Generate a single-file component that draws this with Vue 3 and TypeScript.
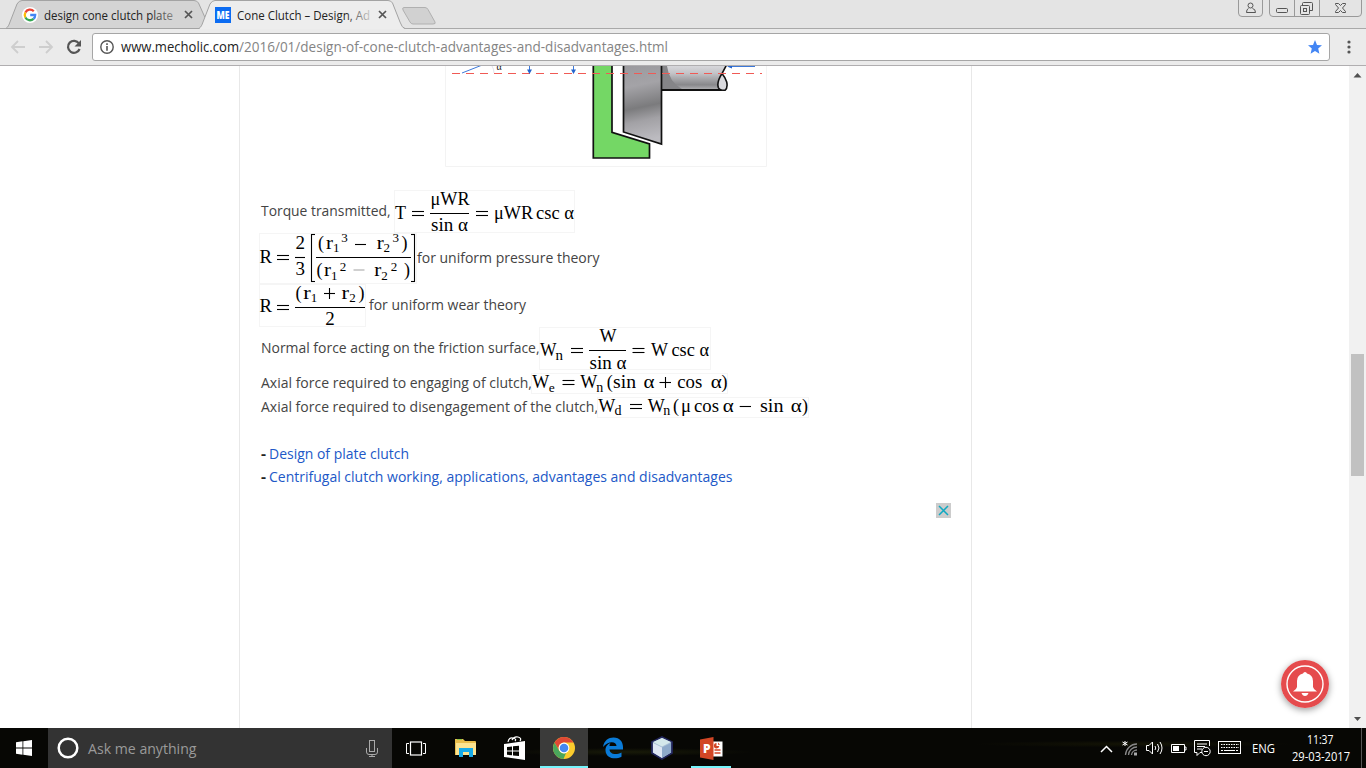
<script setup lang="ts">
import { h } from 'vue'

interface LabelProps { text: string; w: number; h: number; y: number; size: number; fill?: string; weight?: number }

// Single-line label fitted to a fixed width.
const Label = (p: LabelProps) =>
  h('svg', { width: p.w, height: p.h, style: 'display:block;flex:none;overflow:visible' }, [
    h('text', {
      x: 0, y: p.y, textLength: p.w, lengthAdjust: 'spacingAndGlyphs',
      'font-size': p.size, fill: p.fill ?? '#444', 'font-weight': p.weight ?? 400,
    }, p.text),
  ])
Label.props = ['text', 'w', 'h', 'y', 'size', 'fill', 'weight']

// [text, x, baseline, font size, fitted width]
type Glyph = [string, number, number, number, number?]
// [x1, y1, x2, y2, colour]
type Rule = [number, number, number, number, string?]
interface Formula { box: [number, number, number, number]; glyphs: Glyph[]; rules: Rule[] }

interface Row { id: string; label: string; w: number; base: number; height: number; first: boolean; formula: Formula }

const eq = (x: number, y: number): Rule[] => [[x, y, x + 12, y], [x, y + 4, x + 12, y + 4]]

const rows: Row[] = [
  {
    id: 'torque', label: 'Torque transmitted,', w: 129.5, base: 26, height: 43, first: true,
    formula: {
      box: [394, 190, 181, 43],
      glyphs: [['T', 395, 218.7, 19, 11], ['μWR', 430.5, 204.7, 19, 39], ['sin α', 431, 231, 19, 37], ['μWR', 494, 218.7, 19, 39], ['csc α', 536, 218.7, 19, 38]],
      rules: [...eq(412, 211.5), [430, 213.5, 469, 213.5], ...eq(476, 211.5)],
    },
  },
  {
    id: 'pressure', label: 'for uniform pressure theory', w: 182.5, base: 30, height: 51, first: false,
    formula: {
      box: [259, 233, 158, 51],
      glyphs: [
        ['R', 259.5, 263, 19, 12.5], ['2', 295.5, 249.3, 19], ['3', 295.5, 275.3, 19],
        ['(', 318, 249, 18], ['r', 326, 249, 19, 7], ['1', 333, 251.8, 13], ['3', 341.3, 242, 13],
        ['r', 376.7, 249, 19, 7], ['2', 383.5, 251.8, 13], ['3', 392.5, 242, 13], [')', 401.5, 249, 18],
        ['(', 316.5, 275.5, 18], ['r', 324, 275.5, 19, 7], ['1', 331, 280, 13], ['2', 339.7, 270.8, 13],
        ['r', 374.2, 275.5, 19, 7], ['2', 381.3, 280, 13], ['2', 390.7, 270.8, 13], [')', 404, 275.5, 18],
      ],
      rules: [...eq(277, 255.5), [295, 257.5, 305, 257.5], [316, 257.5, 411, 257.5], [355, 244.5, 366, 244.5], [353.5, 270, 364.5, 270, '#aaa'],
        [311.5, 234, 311.5, 282], [311, 234.5, 315, 234.5], [311, 281.5, 315, 281.5],
        [414.5, 234, 414.5, 282], [411, 234.5, 415, 234.5], [411, 281.5, 415, 281.5]],
    },
  },
  {
    id: 'wear', label: 'for uniform wear theory', w: 157, base: 26, height: 43, first: false,
    formula: {
      box: [259, 284, 107, 43],
      glyphs: [['R', 259.5, 312.3, 19, 12.5], ['(', 295.5, 299.3, 18], ['r', 303.3, 299.3, 19, 7.5], ['1', 310.7, 302, 13], ['r', 341.5, 299.3, 19, 7.5], ['2', 349.3, 302, 13], [')', 358.5, 299.3, 18], ['2', 325.3, 325.3, 19]],
      rules: [...eq(277, 305.5), [295, 307.5, 365, 307.5], [324, 293.5, 335, 293.5], [329.5, 288, 329.5, 299]],
    },
  },
  {
    id: 'normal', label: 'Normal force acting on the friction surface,', w: 278.5, base: 26, height: 46, first: true,
    formula: {
      box: [539, 327, 172, 43],
      glyphs: [['W', 540, 356, 19, 16.5], ['n', 555.5, 360, 14, 7.5], ['W', 599.5, 342, 19, 17], ['sin α', 589.5, 369, 19, 37], ['W', 651, 356, 19, 17], ['csc α', 671.5, 356, 19, 37.5]],
      rules: [...eq(571, 348.5), [589, 350.5, 626, 350.5], ...eq(632.5, 348.5)],
    },
  },
  {
    id: 'engage', label: 'Axial force required to engaging of clutch,', w: 271, base: 15, height: 24, first: true,
    formula: {
      box: [531, 373, 197, 21],
      glyphs: [['W', 532.3, 388.3, 19, 17], ['e', 548.7, 391.5, 13, 6], ['W', 580.3, 388.3, 19, 17], ['n', 596.3, 391.5, 14, 7], ['(', 606.7, 388.3, 18], ['sin', 613, 388.3, 19, 23], ['α', 643.5, 388.3, 19, 11], ['cos', 677.3, 388.3, 19, 25], ['α', 710.7, 388.3, 19, 11], [')', 721.5, 388.3, 18]],
      rules: [...eq(562.5, 380.5), [659.5, 382.5, 671, 382.5], [665.5, 377, 665.5, 388]],
    },
  },
  {
    id: 'disengage', label: 'Axial force required to disengagement of the clutch,', w: 337, base: 15, height: 24, first: true,
    formula: {
      box: [597, 397, 212, 21],
      glyphs: [['W', 598.3, 412.3, 19, 17], ['d', 614.5, 415.3, 14, 7], ['W', 647.7, 412.3, 19, 17], ['n', 663.3, 415.3, 14, 7], ['(', 673, 412.3, 18], ['μ', 681, 412.3, 19, 10], ['cos', 694, 412.3, 19, 25], ['α', 722.7, 412.3, 19, 11], ['sin', 760, 412.3, 19, 23.5], ['α', 790.7, 412.3, 19, 11], [')', 802, 412.3, 18]],
      rules: [...eq(630, 404.5), [739.7, 406.5, 751, 406.5]],
    },
  },
]

const FormulaView = (p: { formula: Formula }) => {
  const [x, y, w, hh] = p.formula.box
  return h('svg', { width: w, height: hh, viewBox: `${x} ${y} ${w} ${hh}`, style: 'display:block;flex:none;overflow:visible' }, [
    h('rect', { x: x + 0.5, y: y + 0.5, width: w - 1, height: hh - 1, fill: 'none', stroke: '#f5f5f5' }),
    ...p.formula.glyphs.map(g => h('text', {
      x: g[1], y: g[2], 'font-size': g[3], fill: '#000',
      'font-family': '"Liberation Serif", serif',
      ...(g[4] ? { textLength: g[4], lengthAdjust: 'spacingAndGlyphs' } : {}),
    }, g[0])),
    ...p.formula.rules.map(r => h('line', { x1: r[0], y1: r[1], x2: r[2], y2: r[3], stroke: r[4] ?? '#000', 'stroke-width': 1.1 })),
  ])
}
FormulaView.props = ['formula']

const links = [
  { text: 'Design of plate clutch', w: 140 },
  { text: 'Centrifugal clutch working, applications, advantages and disadvantages', w: 463.5 },
]
</script>

<template>
  <div class="screen">
    <header class="tabs">
      <svg class="tab-shapes" width="1366" height="29" fill="none">
        <path d="M0 28.500H1366" stroke="#a9a9a9" />
        <path d="M6 28.500C8 27 9 25 10 22L17 4Q19 .5 22 .5H194Q197 .5 198.500 3L207 22L212 28.500Z" fill="#d4d4d4" stroke="#a3a3a3" />
        <path d="M199 29C201 27 202 25 203 22L210 4Q212 .5 215 .5H388Q391 .5 392.500 3L400 22Q402 28 405 29Z" fill="#ededed" />
        <path d="M199 28.500C201 27 202 25 203 22L210 4Q212 .5 215 .5H388Q391 .5 392.500 3L400 22Q402 28 405 28.500" stroke="#a3a3a3" />
        <path d="M404 7.500H425Q427 7.500 428 9.500L435 22Q436 24 433 24H413Q411 24 410 22L403 10Q402 7.500 404 7.500Z" fill="#d1d1d1" stroke="#b0b0b0" />
      </svg>
      <div class="tab first">
        <svg width="16" height="16" viewBox="0 0 16 16" fill="none">
          <circle cx="8" cy="8" r="8" fill="#fff" />
          <g stroke-width="2.300">
            <path d="M11.800 4.200A5.200 5.200 0 0 0 3.400 5.500" stroke="#ea4335" />
            <path d="M3.400 5.500A5.200 5.200 0 0 0 3.400 10.500" stroke="#fbbc05" />
            <path d="M3.400 10.500A5.200 5.200 0 0 0 11.500 11.900" stroke="#34a853" />
            <path d="M11.500 11.900A5.200 5.200 0 0 0 13.200 8H8.200" stroke="#4285f4" />
          </g>
        </svg>
        <Label class="t1" text="design cone clutch plate" :w="129" :h="28" :y="19" :size="12" fill="#222" />
        <svg class="x" width="9" height="9"><path d="M1 1L8 8M8 1L1 8" stroke="#555" stroke-width="1.700" /></svg>
        <i class="fade grey"></i>
      </div>
      <div class="tab second">
        <svg width="16" height="16">
          <rect width="16" height="16" fill="#0c6cf2" />
          <text x="1.500" y="12" font-size="11" font-weight="800" fill="#fff" textLength="13" lengthAdjust="spacingAndGlyphs">ME</text>
        </svg>
        <Label class="t2" text="Cone Clutch – Design, Ad" :w="133" :h="28" :y="19" :size="12" fill="#222" />
        <svg class="x" width="9" height="9"><path d="M1 1L8 8M8 1L1 8" stroke="#555" stroke-width="1.700" /></svg>
        <i class="fade light"></i>
      </div>
      <svg class="window-buttons" width="126" height="18" fill="none" stroke="#999">
        <path d="M.5 -1V13Q.5 16.500 4 16.500H21Q24.500 16.500 24.500 13V-1M31.500 -1V13Q31.500 16.500 35 16.500H120Q123.500 16.500 123.500 13V-1M56.500 0V16M81.500 0V16" />
        <g stroke="#555">
          <circle cx="12.500" cy="5.500" r="2.500" />
          <path d="M10.500 8.500Q8.500 9 8.500 12.500H17.500Q17.500 9 14.500 8.500" />
          <rect x="38.500" y="8.500" width="11" height="4" rx="1" />
          <path d="M64.500 5.500V3.500Q64.500 2.500 65.500 2.500H73.500Q74.500 2.500 74.500 3.500V10.500H71.500" />
          <rect x="62.500" y="5.500" width="9" height="9" rx="1" /><rect x="65.500" y="8.500" width="3" height="3" />
          <path d="M97.500 3.500H100.500L102.500 5.500L104.500 3.500H107.500V4.500L104.500 8L107.500 11.500V12.500H104.500L102.500 10.500L100.500 12.500H97.500V11.500L100.500 8L97.500 4.500Z" />
        </g>
      </svg>
    </header>

    <div class="toolbar">
      <svg class="nav" width="92" height="36" fill="none">
        <path d="M25 18H12.500M18 12L12 18L18 24M39 18H51.500M46 12L52 18L46 24" stroke="#cecece" stroke-width="1.800" />
        <path d="M79 14.500A6 6 0 1 0 79.600 20" stroke="#555" stroke-width="2.200" />
        <path d="M81 11V17.500H74.500Z" fill="#555" />
      </svg>
      <div class="omnibox">
        <svg width="14" height="14" fill="none" stroke="#555"><circle cx="7" cy="7" r="6.200" stroke-width="1.400" /><path d="M7 6V10.800M7 3.300V4.900" stroke-width="1.600" /></svg>
        <Label class="host" text="www.mecholic.com" :w="118" :h="26" :y="18" :size="14" fill="#222" />
        <Label text="/2016/01/design-of-cone-clutch-advantages-and-disadvantages.html" :w="429" :h="26" :y="18" :size="14" fill="#848484" />
        <svg class="star" width="14" height="14"><path d="M7 0L9 4.900L14 5.300L10.200 8.600L11.400 13.700L7 11L2.600 13.700L3.800 8.600L0 5.300L5 4.900Z" fill="#4285f4" /></svg>
      </div>
      <svg class="menu" width="6" height="14" fill="#555"><circle cx="3" cy="2" r="1.600" /><circle cx="3" cy="7" r="1.600" /><circle cx="3" cy="12" r="1.600" /></svg>
    </div>

    <main class="page">
      <article class="article">
        <svg class="figure" width="322" height="101" viewBox="445 66 322 101" fill="none">
          <defs>
            <linearGradient id="cone" x1="0" y1="0" x2=".1" y2="1">
              <stop offset="0" stop-color="#9a999d" /><stop offset=".3" stop-color="#a4a3a7" /><stop offset=".58" stop-color="#7b7b7d" /><stop offset=".75" stop-color="#a2a1a5" /><stop offset="1" stop-color="#bcbbc0" />
            </linearGradient>
            <linearGradient id="shaft" x1="0" y1="0" x2="0" y2="1">
              <stop offset="0" stop-color="#dcdce0" /><stop offset=".35" stop-color="#c4c4c8" /><stop offset=".8" stop-color="#88888b" /><stop offset="1" stop-color="#b5b5b8" />
            </linearGradient>
          </defs>
          <path d="M445.500 66V166.500H766.500V66" stroke="#f3f3f3" />
          <path d="M593.300 64V158H649.500V144L612 132.300V64Z" fill="#74d765" stroke="#111" stroke-width="1.700" />
          <path d="M662 64H727L718 80Q717 87 720 90H662Z" fill="url(#shaft)" />
          <path d="M662 66H667Q669 82 682 89H662Z" fill="#858588" />
          <path d="M662 90H724" stroke="#111" stroke-width="1.800" />
          <path d="M726.500 65L722 73.500Q716.500 82 718.300 87.500Q719.500 90.500 725 90.300Q728 88 726.700 82Q725 77 722 73.500" fill="#dadade" stroke="#111" stroke-width="1.600" />
          <path d="M623.500 64V132L661.500 144V64Z" fill="url(#cone)" stroke="#111" stroke-width="1.700" />
          <path d="M452 73.500H762" stroke="#f05a55" stroke-dasharray="8 6" />
          <path d="M462 73L481 65.500M529.500 66V70M573.500 66V70M731 66.500H755" stroke="#3c78d8" />
          <path d="M527 69.500H532L529.500 74ZM571 69.500H576L573.500 74ZM727 66.500L732 65V68.500Z" fill="#2464cc" />
          <path d="M492 66Q494 69 494 73" stroke="#e2e2ea" />
          <text x="496.500" y="70" font-size="10" font-family="Liberation Serif, serif" fill="#111">α</text>
        </svg>

        <div v-for="r in rows" :key="r.id" class="row" :class="r.id">
          <template v-if="r.first">
            <Label class="lead" :text="r.label" :w="r.w" :h="r.height" :y="r.base" :size="14" />
            <i class="space"></i>
            <FormulaView :formula="r.formula" />
          </template>
          <template v-else>
            <FormulaView :formula="r.formula" />
            <i class="space"></i>
            <Label :text="r.label" :w="r.w" :h="r.height" :y="r.base" :size="14" />
          </template>
        </div>

        <ul class="links">
          <li v-for="l in links" :key="l.text">
            <Label text="-" :w="5" :h="23" :y="17" :size="14" fill="#222" :weight="700" />
            <Label :text="l.text" :w="l.w" :h="23" :y="17" :size="14" fill="#2158c7" />
          </li>
        </ul>
        <svg class="ad-close" width="15" height="15"><rect width="15" height="15" fill="#ccc" /><path d="M3 3L12 12M12 3L3 12" stroke="#10a9c2" stroke-width="1.500" /></svg>
      </article>

      <div class="scrollbar">
        <svg width="17" height="17"><path d="M4.500 11.500L8.500 7L12.500 11.500Z" fill="#505050" /></svg>
        <div class="thumb"></div>
        <svg class="down" width="17" height="17"><path d="M5 6L8.500 10L12 6Z" fill="#505050" /></svg>
      </div>

      <svg class="bell" width="48" height="48" viewBox="0 0 48 48">
        <circle cx="24" cy="24" r="24" fill="#e54b4d" />
        <circle cx="24" cy="24" r="18" fill="none" stroke="#fff" stroke-width="1.400" />
        <path d="M24 12Q25.500 12 26 13.500Q32 15 32 21V27Q32.500 29.500 36 31.500H12Q15.500 29.500 16 27V21Q16 15 22 13.500Q22.500 12 24 12ZM20.500 33H27.500Q26.500 36 24 36T20.500 33Z" fill="#fff" />
      </svg>
    </main>

    <footer class="taskbar">
      <div class="start"><svg width="16" height="16" fill="#fff"><path d="M0 2.300L6.500 1.300V7.500H0ZM7.300 1.200L16 0V7.500H7.300ZM0 8.400H6.500V14.700L0 13.700ZM7.300 8.400H16V16L7.300 14.800Z" /></svg></div>
      <div class="search">
        <svg width="22" height="22" fill="none"><circle cx="11" cy="11" r="9.300" stroke="#fff" stroke-width="2.500" /></svg>
        <Label class="ask" text="Ask me anything" :w="108.500" :h="40" :y="26" :size="14.500" fill="#9a9a9a" />
        <svg class="mic" width="12" height="17" fill="none" stroke="#aaa"><rect x="3.500" y=".5" width="5" height="11" /><path d="M.5 8V12Q.5 14.500 3 14.500H9Q11.500 14.500 11.500 12V8M6 14.500V16.500M3 16.500H9" /></svg>
      </div>
      <div class="app task-view"><svg width="20" height="15" fill="none" stroke="#fff"><rect x="4.500" y="1" width="11" height="13" stroke-width="1.200" /><path d="M3 2.500H.5V12.500H3M17 2.500H19.500V12.500H17" /></svg></div>
      <div class="app"><svg width="22" height="20"><path d="M0 1H8L10 3H20Q21 3 21 4V17H0Z" fill="#e9bd4c" /><path d="M1 5H21V17H1Z" fill="#fce391" /><path d="M4 10H18V19H14V14H8V19H4Z" fill="#17aae8" /><path d="M2 1.500H7" stroke="#8cc24a" /></svg></div>
      <div class="app"><svg width="22" height="24"><path d="M4 6Q5 1 9 2T11 5M8 4Q10 0 14 1T16 5" fill="none" stroke="#fff" stroke-width="1.200" /><path d="M0 8L21 5V24L0 21Z" fill="#fff" /><path d="M3 11L8 10.500V14.500H3ZM9 10.300L15 9.700V14.500H9ZM3 15.500H8V19.300L3 18.800ZM9 15.500H15V20L9 19.400Z" fill="#080804" /></svg></div>
      <div class="app active">
        <svg width="22" height="22" viewBox="0 0 22 22"><circle cx="11" cy="11" r="11" fill="#fbcb2d" /><path d="M1.500 5.500A11 11 0 0 1 20.500 5.500H11A5.500 5.500 0 0 0 6.200 13.800Z" fill="#df4935" /><path d="M1.500 5.500L6.200 13.800Q8 16.500 11 16.500L13 16L10.500 22A11 11 0 0 1 1.500 5.500Z" fill="#4aa65c" /><circle cx="11" cy="11" r="5.400" fill="#fff" /><circle cx="11" cy="11" r="4.300" fill="#4688f1" /></svg>
      </div>
      <div class="app"><svg width="20" height="22"><path d="M0 10C1 3.500 5.500 .5 10.500 .5C17 .5 20 5 20 10V12.500H6.500C6.800 17 12.500 18.500 18.500 15.500V19.800C12 23 3 21.500 2.500 13.500C2.300 10 4.500 7 7.500 6C6.700 7.200 6.500 8 6.500 9H13.500C13.500 4 5 3.500 0 10Z" fill="#0a7bd8" /></svg></div>
      <div class="app"><svg width="24" height="24"><path d="M12 1L22 6V17L12 23L2 17V6Z" fill="#a9bfd6" stroke="#22265c" stroke-width="1.800" /><path d="M12 2L21 6L12 10.500L3 6Z" fill="#d4e8eb" /><path d="M3 7L12 11.500V22L3 16.500Z" fill="#dde6f3" /><path d="M12 11.500L21 7V16.500L12 22Z" fill="#8eaaca" /></svg></div>
      <div class="app ppt">
        <svg width="23" height="24"><path d="M13 4.500H22.500V19.500H13Z" fill="#fff" /><path d="M14.500 13H20.500M14.500 16H20.500" stroke="#d24625" stroke-width="1.300" /><path d="M16.500 6A2.700 2.700 0 1 0 19.300 9H16.500Z" fill="#d24625" /><path d="M18 5.500V7.700H20.200Z" fill="#d24625" /><path d="M0 2.500L13.500 0V23L0 20.500Z" fill="#d24625" /><text x="3" y="16" font-size="12" font-weight="800" fill="#fff">P</text></svg>
      </div>
      <div class="tray">
        <svg width="150" height="40" fill="none" stroke="#fff">
          <path d="M1 24L6.500 18.500L12 24" stroke-width="1.500" />
          <path d="M25 13V18M22.500 14L27.500 17M27.500 14L22.500 17" />
          <g stroke="#888" stroke-width="1.300"><path d="M25.500 27A11.500 11.500 0 0 1 37 16M28.500 27A8.500 8.500 0 0 1 37 19M31.500 27A5.500 5.500 0 0 1 37 22" /></g><rect x="34" y="24.500" width="3" height="3" fill="#aaa" stroke="none" />
          <path d="M46.500 17.500H49L52.500 14V26L49 22.500H46.500ZM55 18Q56.500 20 55 22M57.500 16Q60.500 20 57.500 24M60 14Q64 20 60 26" />
          <path d="M71.500 16.500H84.500V24.500H71.500ZM84.500 19H86V22H84.500" /><rect x="73" y="18" width="6" height="5" fill="#fff" stroke="none" />
          <path d="M102 24.500H100L97 27.500V24.500H94.500V12.500H109.500V18M97 16H107M97 18.500H105M97 21H102" /><circle cx="106" cy="23.500" r="4.200" /><path d="M104 23.500H108" />
          <rect x="118.500" y="13.500" width="22" height="12" /><path d="M121 16.500H139M121 19.500H139" stroke-dasharray="1.500 1" /><path d="M121 22.500H123M124 22.500H135M136 22.500H138" />
        </svg>
        <Label class="lang" text="ENG" :w="23" :h="40" :y="24.500" :size="12" fill="#fff" />
        <div class="clock">
          <Label text="11:37" :w="26.500" :h="18" :y="14.500" :size="12" fill="#fff" />
          <Label text="29-03-2017" :w="58" :h="18" :y="13.500" :size="12" fill="#fff" />
        </div>
      </div>
    </footer>
  </div>
</template>

<style>
body { margin: 0; overflow: hidden; }
</style>

<style scoped>
.screen { width: 1366px; height: 768px; display: flex; flex-direction: column; background: #fff; font-family: "Open Sans", "Noto Sans", sans-serif; overflow: hidden; }
svg { display: block; flex: none; overflow: visible; }

.tabs { position: relative; height: 29px; flex: none; display: flex; background: #e4e4e4; }
.tab-shapes { position: absolute; left: 0; top: 0; }
.tab { position: relative; display: flex; align-items: center; height: 29px; box-sizing: border-box; }
.first { margin-left: 22px; width: 193px; }
.second { width: 193px; }
.t1 { margin-left: 6px; }
.t2 { margin-left: 6px; }
.x { margin-left: 11px; }
.second .x { margin-left: 8px; }
.fade { position: absolute; top: 5px; width: 26px; height: 20px; }
.grey { left: 127px; background: linear-gradient(90deg, rgba(212, 212, 212, 0), rgba(212, 212, 212, .6)); }
.light { left: 130px; background: linear-gradient(90deg, rgba(237, 237, 237, 0), rgba(237, 237, 237, .85)); }
.window-buttons { margin-left: auto; margin-right: 2px; position: relative; }

.toolbar { height: 37px; flex: none; display: flex; align-items: center; box-sizing: border-box; background: #ebebeb; border-bottom: 1px solid #b0aeb0; }
.omnibox { width: 1238px; height: 28px; box-sizing: border-box; border: 1px solid #a6a6a6; border-radius: 3px; background: #fff; display: flex; align-items: center; padding: 0 7px; }
.host { margin-left: 7px; }
.star { margin-left: auto; }
.menu { margin-left: 16px; }

.page { position: relative; flex: 1; display: flex; justify-content: space-between; min-height: 0; }
.article { width: 733px; box-sizing: border-box; margin-left: 239px; padding-left: 19px; border-left: 1px solid #e8e8e8; border-right: 1px solid #e8e8e8; }
.figure { margin: 0 0 23px 186px; overflow: hidden; }
.row { display: flex; align-items: flex-start; }
.torque, .wear { height: 43px; }
.pressure { height: 51px; }
.normal { height: 46px; }
.engage, .disengage { height: 24px; }
.lead { margin-left: 1.5px; }
.space { flex: none; width: 0; }
.torque .space { width: 4px; }
.wear .space { width: 3px; }
.normal .space, .engage .space, .disengage .space { margin-left: -.5px; }
.links { list-style: none; margin: 21px 0 0 1.5px; padding: 0; }
.links li { display: flex; gap: 3px; height: 23px; }
.ad-close { margin: 15px 0 0 677px; }
.scrollbar { width: 17px; background: #f1f1f1; display: flex; flex-direction: column; }
.thumb { width: 13px; height: 122px; margin: 271px 0 0 2px; background: #c1c1c1; }
.down { margin-top: auto; }
.bell { position: absolute; left: 1281px; top: 594px; border-radius: 50%; box-shadow: 0 2px 7px rgba(0, 0, 0, .4); }

.taskbar { height: 40px; flex: none; display: flex; background: radial-gradient(ellipse at 46% 60%, #181a08, transparent 12%), radial-gradient(ellipse at 83% 40%, #141405, transparent 10%), #070704; }
.start { width: 48px; display: flex; align-items: center; justify-content: center; }
.search { width: 344px; box-sizing: border-box; padding: 0 14px 0 9px; background: #333; display: flex; align-items: center; }
.ask { margin-left: 9px; }
.mic { margin-left: auto; }
.app { width: 49px; box-sizing: border-box; display: flex; align-items: center; justify-content: center; }
.task-view { width: 48px; margin-right: 1px; }
.active { width: 48px; background: #3b3b3a; border-bottom: 2px solid #76f4fb; padding-top: 1px; margin-left: 1px; }
.ppt { width: 40px; margin-left: 5px; border-bottom: 2px solid #76f4fb; padding-top: 3px; }
.tray { margin-left: auto; display: flex; border-right: 1px solid #555; margin-right: 4px; }
.lang { margin-left: 2px; }
.clock { width: 75px; box-sizing: border-box; margin-left: 11px; display: flex; flex-direction: column; align-items: center; padding: 1px 6px 0 0; }
</style>
